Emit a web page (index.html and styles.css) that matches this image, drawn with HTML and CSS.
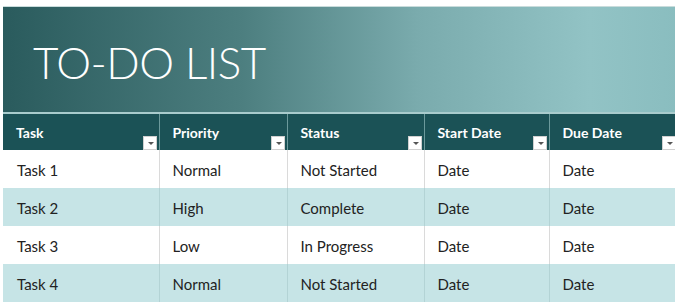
FILE: index.html
```html
<!DOCTYPE html>
<html lang="en">
  <head>
    <meta charset="UTF-8" />
    <title>To-Do List</title>
    <link rel="stylesheet" href="styles.css">
  </head>
  <body>
    <div class="sheet">
      <header class="banner">
        <h1>TO-DO LIST</h1>
      </header>
      <table class="todo">
        <thead>
          <tr>
            <th class="c1">Task<span class="drop"></span></th>
            <th class="c2">Priority<span class="drop"></span></th>
            <th class="c3">Status<span class="drop"></span></th>
            <th class="c4">Start Date<span class="drop"></span></th>
            <th class="c5">Due Date<span class="drop"></span></th>
          </tr>
        </thead>
        <tbody>
          <tr>
            <td>Task 1</td><td>Normal</td><td>Not Started</td><td>Date</td><td>Date</td>
          </tr>
          <tr>
            <td>Task 2</td><td>High</td><td>Complete</td><td>Date</td><td>Date</td>
          </tr>
          <tr>
            <td>Task 3</td><td>Low</td><td>In Progress</td><td>Date</td><td>Date</td>
          </tr>
          <tr>
            <td>Task 4</td><td>Normal</td><td>Not Started</td><td>Date</td><td>Date</td>
          </tr>
        </tbody>
      </table>
    </div>
  </body>
</html>
```

FILE: styles.css
```css
body {
  margin: 0;
  background-color: white;
  font-family: "Lato", "Liberation Sans", sans-serif;
  color: #222;
  overflow: hidden;
}
.sheet {
  padding: 6px 0 0 3px;
  width: 690px;
}
.banner {
  height: 105px;
  border-top: 1px solid #c9dcdc;
  background: linear-gradient(to right, #2a5b5d 0%, #4d7f80 35%, #7aabad 60%, #92c3c5 85%, #88bcbe 100%);
  display: flex;
  align-items: center;
  padding-left: 30px;
}
h1 {
  margin: 0;
  color: white;
  font-weight: 300;
  font-size: 44px;
  letter-spacing: -0.5px;
  padding-top: 4px;
}
.todo {
  border-collapse: collapse;
  table-layout: fixed;
  width: 690px;
  border-top: 2px solid #a9cccd;
}
th {
  position: relative;
  background-color: #1b5256;
  color: white;
  font-weight: bold;
  font-size: 14px;
  text-align: left;
  height: 37px;
  padding: 0 13px;
  vertical-align: top;
  padding-top: 10px;
  box-sizing: border-box;
  border-left: 1px solid #6c9a9c;
}
th:first-child {
  border-left: none;
}
.c1 { width: 156px; }
.c2 { width: 128px; }
.c3 { width: 137px; }
.c4 { width: 125px; }
.c5 { width: 144px; }
.drop {
  position: absolute;
  right: 2px;
  bottom: 0;
  width: 14px;
  height: 14px;
  background-color: white;
  border: 1px solid #d0d0d0;
  box-sizing: border-box;
}
.drop::after {
  content: "";
  position: absolute;
  left: 4px;
  top: 5px;
  border-left: 3px solid transparent;
  border-right: 3px solid transparent;
  border-top: 3px solid #555;
}
.c5 .drop {
  right: 17px;
}
td {
  height: 38px;
  padding: 0 13px;
  padding-top: 2px;
  font-size: 15px;
  border-left: 1px solid #dadada;
  box-sizing: border-box;
}
td:first-child {
  border-left: none;
  padding-left: 14px;
}
tbody tr:nth-child(even) td {
  background-color: #c6e4e6;
  border-left-color: #b3d3d5;
}
```
